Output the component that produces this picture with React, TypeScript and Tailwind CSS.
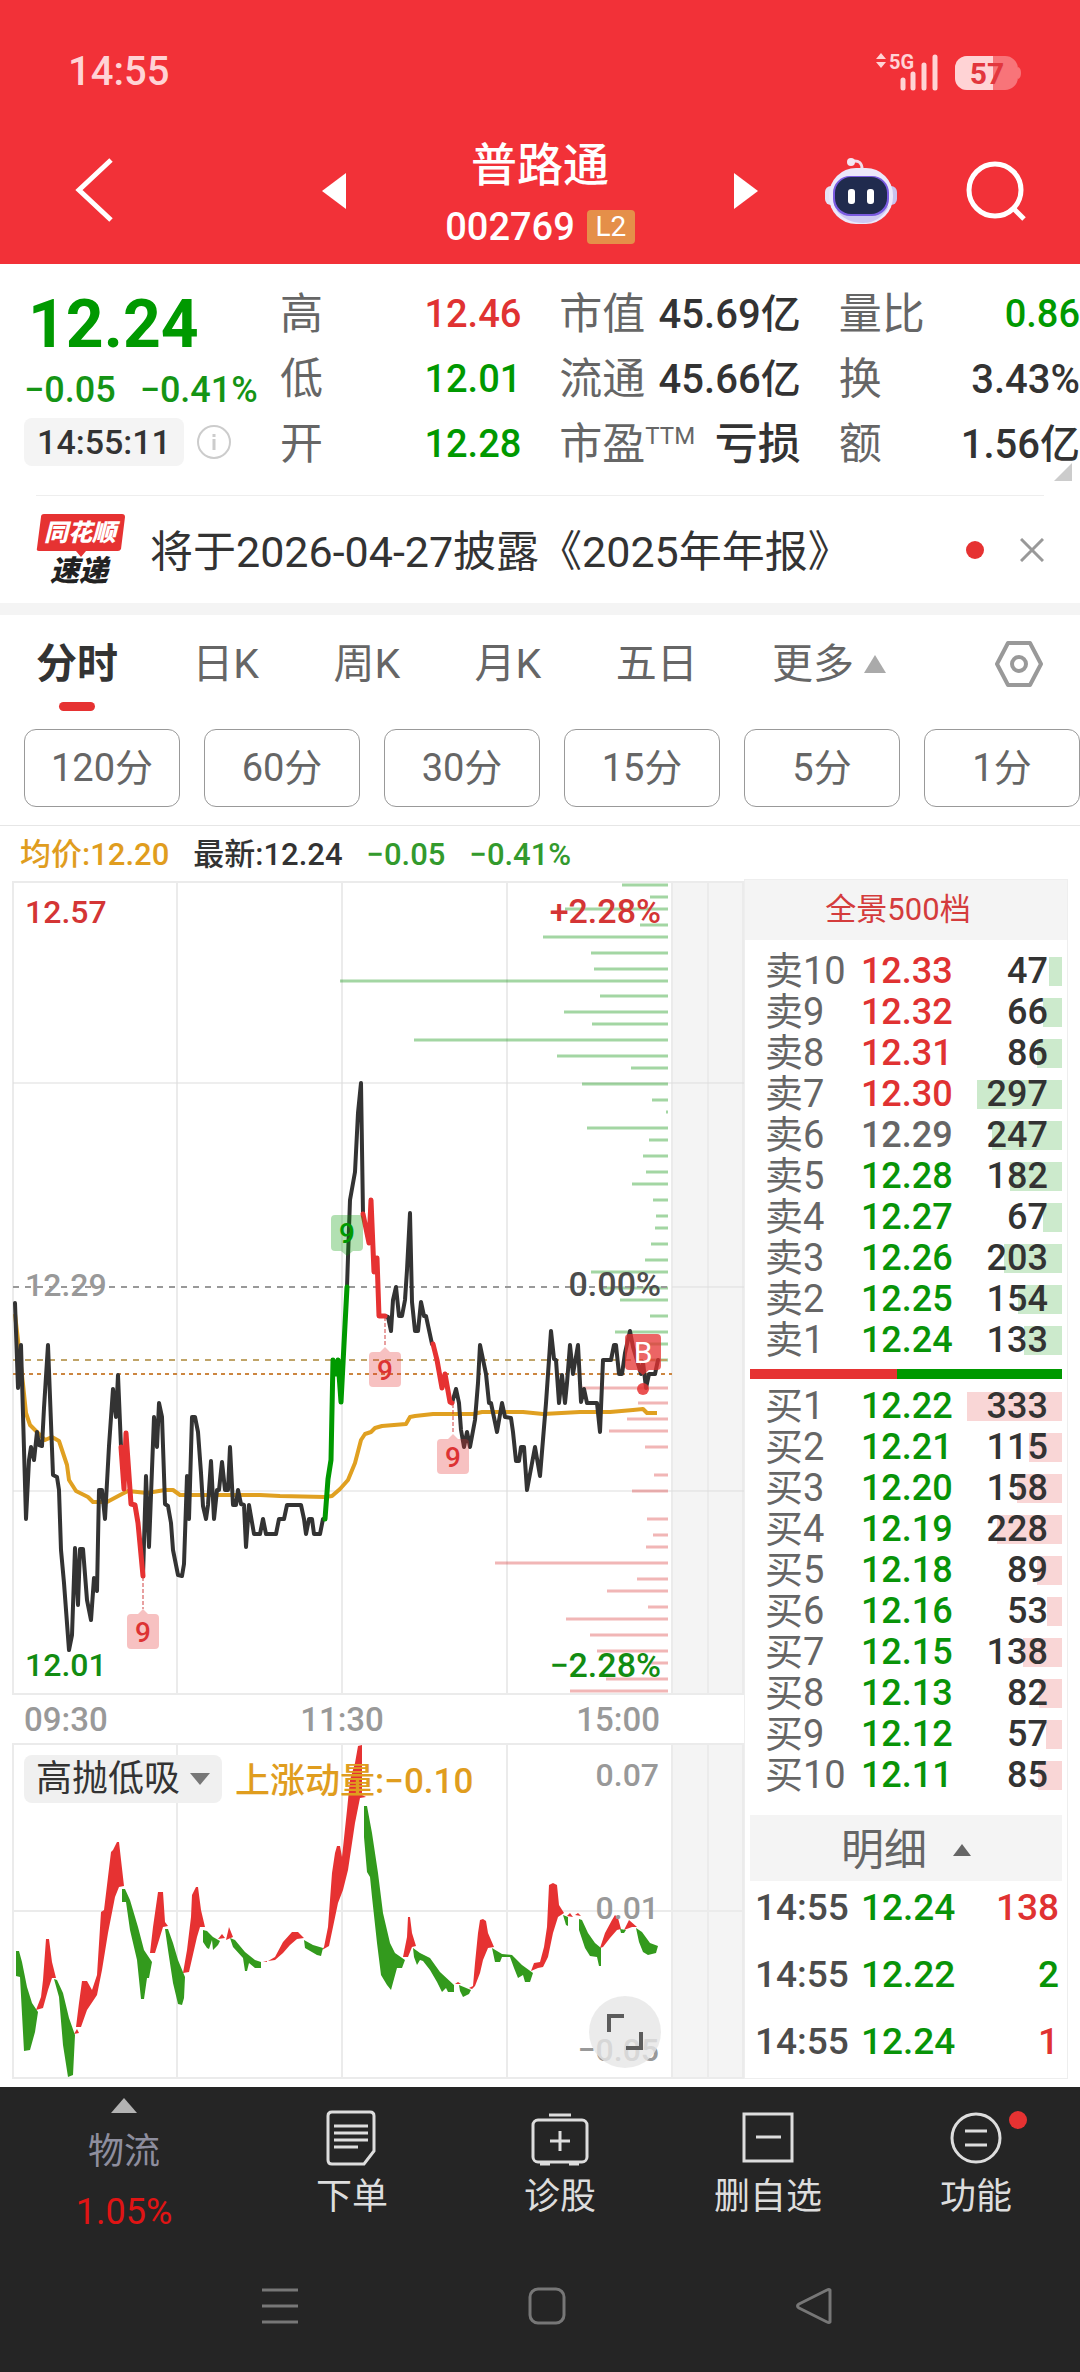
import React, { useState } from 'react';
import { clsx, type ClassValue } from 'clsx';
import { twMerge } from 'tailwind-merge';

function cn(...inputs: ClassValue[]) {
  return twMerge(clsx(inputs));
}

const stats = [
  { label: '高', value: '12.46', color: 'text-[#e03232]' },
  { label: '市值', value: '45.69亿', color: 'text-[#333333]', wide: true },
  { label: '量比', value: '0.86', color: 'text-[#009900]' },
  { label: '低', value: '12.01', color: 'text-[#009900]' },
  { label: '流通', value: '45.66亿', color: 'text-[#333333]', wide: true },
  { label: '换', value: '3.43%', color: 'text-[#333333]', wide: true },
  { label: '开', value: '12.28', color: 'text-[#009900]' },
  { label: '市盈', sup: 'TTM', value: '亏损', color: 'text-[#333333]', wide: true },
  { label: '额', value: '1.56亿', color: 'text-[#333333]', wide: true },
];

const tabs = ['分时', '日K', '周K', '月K', '五日'];
const minutes = ['120分', '60分', '30分', '15分', '5分', '1分'];

type Level = [string, string, number];

const sells: Level[] = [
  ['卖10', '12.33', 47],
  ['卖9', '12.32', 66],
  ['卖8', '12.31', 86],
  ['卖7', '12.30', 297],
  ['卖6', '12.29', 247],
  ['卖5', '12.28', 182],
  ['卖4', '12.27', 67],
  ['卖3', '12.26', 203],
  ['卖2', '12.25', 154],
  ['卖1', '12.24', 133],
];

const buys: Level[] = [
  ['买1', '12.22', 333],
  ['买2', '12.21', 115],
  ['买3', '12.20', 158],
  ['买4', '12.19', 228],
  ['买5', '12.18', 89],
  ['买6', '12.16', 53],
  ['买7', '12.15', 138],
  ['买8', '12.13', 82],
  ['买9', '12.12', 57],
  ['买10', '12.11', 85],
];

const trades = [
  { time: '14:55', price: '12.24', qty: 138, up: true },
  { time: '14:55', price: '12.22', qty: 2, up: false },
  { time: '14:55', price: '12.24', qty: 1, up: true },
];

// price line, split where the colour changes
const priceSegments = [
  {
    color: '#333333',
    width: 4,
    points:
      '15,1303 18,1388 21,1345 26,1519 29,1460 31,1447 34,1460 37,1432 39,1445 42,1446 44,1408 48,1345 53,1475 57,1477 59,1490 61,1550 64,1583 69,1650 72,1635 75,1548 78,1605 80,1549 83,1549 87,1600 91,1620 94,1578 97,1591 99,1490 102,1490 105,1519 109,1446 113,1389 116,1417 118,1375 121,1447',
  },
  {
    color: '#333333',
    width: 4,
    points:
      '143,1576 146,1476 149,1547 154,1417 157,1447 159,1403 162,1417 165,1504 168,1506 171,1523 173,1550 178,1575 182,1576 184,1564 187,1476 189,1519 192,1417 195,1417 198,1432 201,1473 203,1506 206,1519 208,1505 211,1461 214,1519 217,1490 219,1490 222,1462 225,1490 228,1490 230,1447 233,1505 236,1505 238,1490 241,1504 244,1505 246,1547 249,1505 254,1534 260,1534 263,1519 266,1534 276,1534 279,1519 284,1519 287,1505 301,1505 304,1519 306,1534 309,1519 312,1519 314,1534 320,1534 323,1519 325,1519',
  },
  {
    color: '#333333',
    width: 4,
    points: '347,1287 348,1257 350,1200 355,1172 358,1113 361,1083 363,1214',
  },
  {
    color: '#333333',
    width: 4,
    points:
      '385,1316 388,1317 391,1331 393,1300 396,1287 399,1316 402,1316 405,1300 407,1270 410,1213 412,1302 415,1331 418,1331 421,1302 424,1316 426,1316 432,1344 433,1344',
  },
  {
    color: '#333333',
    width: 4,
    points:
      '452,1403 456,1389 459,1403 461,1430 464,1447 467,1432 470,1447 475,1420 478,1383 480,1345 486,1374 489,1403 491,1403 497,1432 502,1403 505,1417 511,1418 513,1432 516,1461 519,1461 521,1447 524,1447 527,1490 535,1447 540,1476 546,1403 551,1331 554,1359 556,1360 559,1403 562,1375 565,1403 567,1383 570,1345 573,1374 578,1345 581,1402 584,1389 587,1403 597,1403 600,1432 603,1360 611,1360 614,1345 616,1345 619,1374 622,1374 625,1353 630,1331 633,1347 641,1374 643,1362 646,1388 649,1374 655,1374 658,1360',
  },
  { color: '#e63232', width: 5, points: '121,1447 124,1489 126,1433 131,1504 135,1505 138,1523 143,1576' },
  { color: '#e63232', width: 5, points: '363,1214 369,1243 371,1200 374,1272 377,1258 379,1316 385,1316' },
  { color: '#e63232', width: 5, points: '433,1344 437,1360 442,1388 445,1374 450,1402 452,1403' },
  {
    color: '#009900',
    width: 5,
    points: '325,1519 328,1479 331,1460 333,1360 336,1374 338,1360 341,1402 345,1325 347,1287',
  },
];

const averageLine =
  '15,1314 23,1384 26,1413 30,1425 37,1432 45,1440 52,1437 59,1441 67,1465 69,1480 76,1491 88,1497 93,1502 107,1502 122,1494 128,1491 147,1493 165,1490 173,1490 180,1495 260,1495 280,1496 325,1497 332,1496 340,1489 348,1480 355,1463 361,1440 365,1434 371,1432 375,1428 382,1426 406,1424 410,1417 415,1416 433,1414 453,1414 473,1414 482,1412 523,1412 543,1414 580,1412 610,1412 633,1410 643,1409 647,1413 657,1413';

// [y, left end] of each resting order line
const sellDepth = [
  [885, 622], [897, 650], [909, 565], [925, 640], [937, 543], [953, 591], [969, 594], [981, 340],
  [996, 600], [1012, 564], [1024, 592], [1040, 414], [1056, 557], [1068, 631], [1084, 582],
  [1100, 652], [1112, 666], [1128, 587], [1140, 649], [1156, 643], [1172, 646], [1184, 632],
  [1200, 653], [1216, 656], [1228, 655], [1244, 651], [1260, 645], [1272, 591], [1288, 603],
  [1300, 620], [1316, 650], [1332, 615], [1344, 640], [1360, 650],
];

const buyDepth = [
  [1388, 580], [1403, 638], [1419, 627], [1431, 609], [1447, 645], [1475, 654], [1491, 632],
  [1519, 647], [1535, 653], [1547, 646], [1563, 495], [1579, 637], [1591, 607], [1607, 648],
  [1619, 566], [1635, 590], [1651, 597], [1663, 650], [1679, 606], [1691, 570],
];

const momentumUp = [
  '36,2010 41,1997 43,1980 46,1939 49,1939 52,1962 56,1978 52,1978 48,1990 43,2008',
  '74,2034 77,2029 79,2033',
  '76,2027 79,2003 82,1981 87,1981 92,1990 97,1975 101,1912 104,1910 111,1852 113,1850 117,1842 119,1842 124,1886 119,1887 115,1897 108,1933 102,1970 97,1995 87,2010 81,2027',
  '150,1953 153,1927 158,1892 163,1892 165,1922 168,1926 163,1927 155,1953',
  '183,1973 187,1950 191,1917 192,1895 196,1887 198,1887 201,1910 205,1927 200,1927 197,1937 189,1972',
  '218,1939 222,1934 225,1938',
  '226,1940 229,1927 233,1937',
  '263,1962 267,1961 267,1962',
  '268,1961 275,1957 283,1942 292,1932 298,1932 304,1938 297,1939 290,1945 283,1953 275,1960',
  '324,1947 328,1927 332,1873 335,1853 337,1846 340,1846 342,1857 347,1810 350,1780 355,1763 358,1746 362,1745 362,1795 366,1797 360,1798 355,1823 348,1870 343,1890 338,1903 333,1927 329,1946 322,1950',
  '403,1957 407,1937 408,1917 410,1917 412,1933 416,1946 412,1947 408,1957',
  '455,1984 458,1982 461,1984',
  '469,1988 473,1986 475,1963 478,1933 480,1920 483,1919 486,1921 488,1933 494,1947 488,1948 483,1960 480,1973 475,1986 472,1989',
  '531,1971 534,1963 540,1962 544,1947 547,1927 549,1885 553,1883 557,1885 559,1905 564,1913 558,1917 553,1933 548,1957 543,1967 538,1968',
  '567,1916 570,1913 573,1917',
  '575,1915 578,1913 581,1916',
  '600,1948 605,1933 612,1920 615,1915 618,1918 621,1929 617,1930 610,1938 603,1947',
  '624,1930 629,1920 637,1927 632,1927',
];

const momentumDown = [
  '16,1951 19,1951 22,1962 27,1987 32,2003 38,2012 35,2032 30,2050 24,2051 20,1977 16,1976',
  '54,1979 57,1980 63,1993 69,2018 75,2035 73,2075 68,2077 63,2045 59,1997',
  '122,1889 125,1889 130,1900 138,1927 144,1950 152,1962 149,1978 147,1978 144,1999 141,1999 137,1960 130,1930 126,1902 122,1902',
  '165,1929 168,1929 173,1943 178,1960 185,1977 184,1998 182,2005 178,2004 173,1983 168,1950',
  '203,1930 207,1931 213,1937 220,1941 218,1945 213,1950 212,1940 209,1949 207,1948 203,1942',
  '230,1938 235,1940 245,1952 255,1960 261,1962 261,1968 255,1968 249,1963 247,1971 245,1971 243,1958 233,1947',
  '304,1940 313,1945 323,1948 321,1956 317,1955 305,1948',
  '364,1806 367,1806 372,1833 378,1873 383,1913 390,1943 395,1953 405,1960 402,1968 397,1968 391,1990 387,1985 381,1975 377,1943 372,1897 370,1877 367,1872 364,1837',
  '413,1948 420,1953 430,1958 440,1972 454,1985 454,1992 448,1992 446,1988 442,1992 437,1982 430,1970 423,1961 420,1960 417,1965 414,1957',
  '459,1985 471,1990 469,1994 463,1997 460,1991',
  '492,1948 502,1954 512,1955 522,1965 533,1973 530,1982 525,1982 523,1975 518,1978 514,1968 510,1957 502,1957 500,1962 495,1962',
  '563,1915 568,1917 568,1926 566,1925',
  '579,1919 582,1920 588,1933 595,1943 601,1948 601,1966 599,1966 597,1957 590,1956 585,1948 579,1930',
  '620,1929 626,1930 624,1933 621,1933',
  '636,1928 642,1932 650,1943 658,1946 656,1953 648,1955 643,1952 639,1942',
];

function StatusBar() {
  return (
    <div className="flex items-center justify-between pt-12 h-24 pl-[68px] pr-[59px] text-[#ffd3d5]">
      <span className="text-[40px] leading-[48px] font-medium">14:55</span>
      <svg viewBox="875 48 146 48" className="w-[146px] h-12" aria-label="5G 57%">
        <path d="M881 53l5 6h-10zM881 68l5-6h-10z" fill="currentColor" />
        <text x="889" y="69" fontSize="20" fontWeight="700" fill="currentColor">5G</text>
        <path d="M903 80v8M913 74v14M924 65v23M935 57v31" stroke="currentColor" strokeWidth="5" strokeLinecap="round" />
        <path d="M967 56h38a13 13 0 0 1 13 12v10a13 13 0 0 1-13 12h-38a12 12 0 0 1-12-12v-10a12 12 0 0 1 12-12z" fill="#f87479" />
        <path d="M1018 67q3 1 3 6t-3 6z" fill="#f87479" />
        <path d="M993 56h-26a12 12 0 0 0-12 12v10a12 12 0 0 0 12 12h26z" fill="currentColor" />
        <text x="987" y="84" fontSize="30" fontWeight="700" textAnchor="middle" fill="#e2363d">57</text>
      </svg>
    </div>
  );
}

function Robot() {
  return (
    <svg viewBox="0 0 72 68" className="w-[72px] h-[68px]" aria-hidden="true">
      <path d="M28 4q9-1 9 8" fill="none" stroke="#f1dcea" strokeWidth="3" />
      <circle cx="26" cy="5" r="4" fill="#f4e6f2" />
      <rect x="0" y="29" width="12" height="19" rx="6" fill="#e6e2f5" />
      <rect x="60" y="29" width="12" height="19" rx="6" fill="#c9c3ee" />
      <rect x="4" y="11" width="64" height="56" rx="27" fill="#ece8fa" />
      <path d="M11 53q10 13 27 13t26-17q-24 14-53 4z" fill="#cdc8f2" />
      <rect x="8" y="19" width="56" height="40" rx="17" fill="#7a5be0" />
      <rect x="10" y="20" width="52" height="37" rx="16" fill="#202b4e" />
      <rect x="23" y="32" width="7" height="15" rx="3" fill="#ffffff" />
      <rect x="42" y="32" width="7" height="15" rx="3" fill="#ffffff" />
    </svg>
  );
}

function Header() {
  return (
    <header className="bg-[#f23138] text-white">
      <StatusBar />
      <div className="grid grid-cols-[1fr_436px_1fr] items-center h-[168px] pt-[22px]">
        <div className="pl-[75px]">
          <button type="button" aria-label="返回" className="block">
            <svg viewBox="0 0 40 68" className="w-10 h-[68px]" fill="none" stroke="currentColor" strokeWidth="5">
              <path d="M36 3L4 33l32 30" />
            </svg>
          </button>
        </div>
        <div className="flex items-center justify-between">
          <button type="button" aria-label="上一只">
            <svg viewBox="0 0 24 36" className="w-6 h-9"><path d="M24 0v36L0 18z" fill="currentColor" /></svg>
          </button>
          <div className="flex flex-col items-center gap-2.5 pt-1.5">
            <h1 className="text-[46px] leading-[56px] font-medium">普路通</h1>
            <div className="flex items-center gap-3">
              <span className="text-[38px] leading-[48px] font-medium">002769</span>
              <span className="bg-[#e58f49] rounded-sm w-12 text-center text-[28px] leading-[34px]">L2</span>
            </div>
          </div>
          <button type="button" aria-label="下一只">
            <svg viewBox="0 0 24 36" className="w-6 h-9"><path d="M0 0v36l24-18z" fill="currentColor" /></svg>
          </button>
        </div>
        <div className="flex items-center justify-between pl-[67px] pr-[52px]">
          <button type="button" aria-label="智能助手"><Robot /></button>
          <button type="button" aria-label="搜索">
            <svg viewBox="0 0 64 64" className="w-16 h-16" fill="none" stroke="currentColor" strokeWidth="5">
              <circle cx="31" cy="31" r="26" />
              <path d="M49 49l11 11" />
            </svg>
          </button>
        </div>
      </div>
    </header>
  );
}

function Quote() {
  return (
    <section className="relative flex pl-6 pt-[18px] pb-[18px]">
      <div className="w-[256px] shrink-0">
        <div className="pl-1 text-[66px] leading-[86px] font-bold text-[#009900]">12.24</div>
        <div className="flex gap-6 text-[36px] leading-[44px] font-medium text-[#159415] whitespace-nowrap">
          <span>−0.05</span>
          <span>−0.41%</span>
        </div>
        <div className="flex items-center gap-3 mt-1.5">
          <span className="bg-[#f4f4f4] rounded-lg w-40 text-center text-[34px] leading-[48px] font-medium text-[#333333]">14:55:11</span>
          <button type="button" aria-label="说明">
            <svg viewBox="0 0 36 36" className="w-9 h-9" fill="none" stroke="#cccccc" strokeWidth="2">
              <circle cx="18" cy="18" r="16" />
              <path d="M18 15v11M18 10v3" strokeWidth="3" />
            </svg>
          </button>
        </div>
      </div>
      <dl className="flex-1 grid grid-cols-3 gap-x-[38px]">
        {stats.map((item) => (
          <div key={item.label} className="flex items-center justify-between h-[65px] whitespace-nowrap">
            <dt className="flex text-[43px] text-[#666666]">
              {item.label}
              {item.sup && <sup className="text-[24px] top-2 h-8 leading-8">{item.sup}</sup>}
            </dt>
            <dd className={cn('text-[38px] font-medium', item.color, item.wide && 'text-[40px]', item.sup && 'text-[43px]')}>
              {item.value}
            </dd>
          </div>
        ))}
      </dl>
      <svg viewBox="0 0 18 18" className="absolute right-2 bottom-3.5 w-[18px] h-[18px]"><path d="M18 0v18H0z" fill="#cccccc" /></svg>
    </section>
  );
}

function News() {
  return (
    <section className="flex items-center h-[108px] mx-9 border-t border-[#eeeeee]">
      <svg viewBox="0 0 90 80" className="w-[90px] h-20 shrink-0" aria-label="同花顺速递">
        <path d="M8 4h78q3 0 3 3l-4 32q-1 2-3 2H50l-5 6-5-6H3q-3 0-2-3L5 7q0-3 3-3z" fill="#e63232" />
        <text x="44" y="31" fontSize="24" fontWeight="900" fontStyle="italic" textAnchor="middle" fill="#ffffff">同花顺</text>
        <text x="43" y="71" fontSize="29" fontWeight="900" fontStyle="italic" textAnchor="middle" fill="#222222">速递</text>
      </svg>
      <a href="#report" className="flex-1 pt-1 pl-6 text-[43px] leading-[56px] text-[#333333] whitespace-nowrap">
        将于2026-04-27披露《2025年年报》
      </a>
      <span className="w-[18px] h-[18px] rounded-full bg-[#e63232] mr-9" />
      <button type="button" aria-label="关闭">
        <svg viewBox="0 0 24 24" className="w-6 h-6" stroke="#999999" strokeWidth="3"><path d="M1 1l22 22M23 1L1 23" /></svg>
      </button>
    </section>
  );
}

function Tabs() {
  const [active, setActive] = useState('分时');

  return (
    <nav className="flex items-center justify-between h-[98px] pl-9 pr-9">
      <div className="flex justify-between w-[850px] text-[41px] leading-[98px] text-[#666666]">
        {tabs.map((tab) => (
          <button
            key={tab}
            type="button"
            onClick={() => setActive(tab)}
            className={cn('relative', tab === active && 'font-bold text-[#333333]')}
          >
            {tab}
            {tab === active && (
              <span className="absolute bottom-0.5 left-1/2 -translate-x-1/2 w-9 h-[9px] rounded-full bg-[#e63232]" />
            )}
          </button>
        ))}
        <button type="button" className="flex items-center gap-2.5">
          更多
          <svg viewBox="0 0 22 18" className="w-[22px] h-[18px]"><path d="M11 0l11 18H0z" fill="#aaaaaa" /></svg>
        </button>
      </div>
      <button type="button" aria-label="设置">
        <svg viewBox="0 0 50 48" className="w-[50px] h-12" fill="none" stroke="#999999" strokeWidth="4" strokeLinejoin="round">
          <path d="M14 3h22l11 21-11 21H14L3 24z" />
          <circle cx="25" cy="24" r="7" />
        </svg>
      </button>
    </nav>
  );
}

function Badge({ x, y, from }: { x: number; y: number; from: number }) {
  return (
    <g>
      <path d={`M${x} ${from}V${y - 5}`} stroke="#d04040" strokeWidth="1" strokeDasharray="4 2" />
      <path d={`M${x - 16} ${y + 4}q0-4 4-4h7l5-5 5 5h7q4 0 4 4v27q0 4-4 4h-24q-4 0-4-4z`} fill="#e63232" fillOpacity="0.3" />
      <text x={x} y={y + 28} fontSize="28" fontWeight="500" textAnchor="middle" fill="#dd3333">9</text>
    </g>
  );
}

function PriceChart() {
  return (
    <svg viewBox="0 879 744 817" className="block w-full" aria-label="分时走势">
      <rect x="671" y="881" width="73" height="814" fill="#f4f4f4" />
      <g stroke="#ebebeb" strokeWidth="2">
        <path d="M13 882H744M13 1694H744M13 881V1695M177 881V1695M342 881V1695M507 881V1695M672 881V1695M708 881V1695M743 881V1695" />
        <path d="M13 1083H744M13 1491H744M672 1287H744" strokeWidth="1" stroke="#dddddd" />
      </g>
      <path d={sellDepth.map(([y, x]) => `M${x} ${y}H668`).join('')} stroke="#008c00" strokeOpacity="0.36" strokeWidth="3" />
      <path d={buyDepth.map(([y, x]) => `M${x} ${y}H668`).join('')} stroke="#d93636" strokeOpacity="0.36" strokeWidth="3" />
      <path d="M13 1287H668" stroke="#999999" strokeWidth="2" strokeDasharray="6 6" />
      <path d="M13 1360H668" stroke="#c0a468" strokeWidth="2" strokeDasharray="6 6" />
      <path d="M13 1374H672" stroke="#cc8640" strokeWidth="2" strokeDasharray="4 4" />
      <polyline points={averageLine} fill="none" stroke="#e0a021" strokeWidth="4" strokeLinejoin="round" />
      {priceSegments.map((segment) => (
        <polyline
          key={segment.points}
          points={segment.points}
          fill="none"
          stroke={segment.color}
          strokeWidth={segment.width}
          strokeLinejoin="round"
          strokeLinecap="round"
        />
      ))}
      <path d="M331 1219q0-4 4-4h24q4 0 4 4v28q0 4-4 4h-6l-6 5-6-5h-6q-4 0-4-4z" fill="#009900" fillOpacity="0.3" />
      <text x="347" y="1243" fontSize="28" fontWeight="500" textAnchor="middle" fill="#009900">9</text>
      <Badge x={143} y={1614} from={1577} />
      <Badge x={385} y={1352} from={1317} />
      <Badge x={453} y={1439} from={1404} />
      <path d="M625 1338q0-4 4-4h28q4 0 4 4v28q0 4-4 4h-8l-6 5-6-5h-8q-4 0-4-4z" fill="#e63232" fillOpacity="0.75" />
      <circle cx="643" cy="1389" r="6" fill="#e63232" fillOpacity="0.85" />
      <text x="643" y="1363" fontSize="30" textAnchor="middle" fill="#ffffff">B</text>
      <g fontSize="32" fontWeight="500">
        <text x="25" y="923" fill="#d43535">12.57</text>
        <text x="25" y="1296" fill="#999999">12.29</text>
        <text x="25" y="1676" fill="#128c12">12.01</text>
      </g>
      <g fontSize="34" fontWeight="500" textAnchor="end">
        <text x="661" y="923" fill="#d43535">+2.28%</text>
        <text x="661" y="1296" fill="#4c4c4c">0.00%</text>
        <text x="661" y="1677" fill="#128c12">−2.28%</text>
      </g>
    </svg>
  );
}

function MomentumChart() {
  return (
    <div className="relative">
      <svg viewBox="0 1743 744 336" className="block w-full" aria-label="上涨动量">
        <rect x="671" y="1743" width="73" height="335" fill="#f4f4f4" />
        <path
          d="M13 1744H744M13 1911H744M13 2078H744M13 1743V2079M177 1743V2079M342 1743V2079M507 1743V2079M672 1743V2079M708 1743V2079M743 1743V2079"
          stroke="#ebebeb"
          strokeWidth="2"
        />
        {momentumUp.map((points) => <polygon key={points} points={points} fill="#e63232" />)}
        {momentumDown.map((points) => <polygon key={points} points={points} fill="#339a1d" />)}
        <text x="235" y="1793" fontSize="35" fontWeight="500" fill="#e09d1e">上涨动量:−0.10</text>
        <g fontSize="32" fontWeight="500" fill="#999999" textAnchor="end">
          <text x="659" y="1786">0.07</text>
          <text x="659" y="1919">0.01</text>
          <text x="659" y="2061">−0.05</text>
        </g>
      </svg>
      <button type="button" className="absolute left-6 top-3 flex items-center gap-2.5 h-12 px-3 rounded-lg bg-[#f0f0f0] text-[36px] text-[#333333] whitespace-nowrap">
        高抛低吸
        <svg viewBox="0 0 20 12" className="w-5 h-3"><path d="M0 0h20L10 12z" fill="#777777" /></svg>
      </button>
      <button type="button" aria-label="全屏" className="absolute right-[83px] bottom-[11px] w-[72px] h-[72px] rounded-full bg-[#e6e6e6]/80 flex items-center justify-center">
        <svg viewBox="0 0 38 38" className="w-[38px] h-[38px]" fill="none" stroke="#5c5c5c" strokeWidth="4">
          <path d="M3 19V3h15M35 19v16H20" />
        </svg>
      </button>
    </div>
  );
}

function priceColor(price: string) {
  if (Number(price) > 12.29) return 'text-[#e03232]';
  if (Number(price) < 12.29) return 'text-[#089408]';
  return 'text-[#666666]';
}

function Levels({ rows, bar }: { rows: Level[]; bar: string }) {
  return (
    <table className="w-full table-fixed text-left">
      <tbody>
        {rows.map(([label, price, qty]) => (
          <tr key={label} className="leading-[41px] text-[36px] font-medium">
            <th scope="row" className="w-[36%] p-0 pl-5 text-[38px] font-normal text-[#666666] whitespace-nowrap">{label}</th>
            <td className={cn('w-[29%] p-0', priceColor(price))}>{price}</td>
            <td className="relative p-0 pr-[19px] text-right text-[#333333]">
              <span
                className={cn('absolute right-[5px] top-1.5 h-[29px]', bar)}
                style={{ width: `${Math.round(qty * 0.285)}px` }}
              />
              <span className="relative">{qty}</span>
            </td>
          </tr>
        ))}
      </tbody>
    </table>
  );
}

function OrderBook() {
  return (
    <aside className="border border-[#eeeeee]">
      <button type="button" className="block w-full h-[60px] pr-4 bg-[#f4f4f4] text-[31px] text-[#d43c3c]">全景500档</button>
      <div className="mt-[11px]">
        <Levels rows={sells} bar="bg-[#cceacc]" />
      </div>
      <div className="flex h-[10px] mx-[5px] mt-2 mb-[7px] bg-[#009900]">
        <div className="w-[47%] bg-[#e63232]" />
      </div>
      <Levels rows={buys} bar="bg-[#f9d6d6]" />
      <button type="button" className="flex items-center justify-center gap-[26px] w-[312px] max-w-full h-[66px] mx-auto mt-[19px] pt-1 bg-[#f4f4f4] text-[43px] leading-[60px] text-[#666666]">
        明细
        <svg viewBox="0 0 18 12" className="w-[18px] h-3"><path d="M9 0l9 12H0z" fill="#666666" /></svg>
      </button>
      <table className="w-full table-fixed">
        <tbody>
          {trades.map((trade, i) => (
            <tr key={i} className="leading-[54px] text-[37px] font-medium [&:not(:first-child)>td]:pt-[13px]">
              <td className="w-[36%] p-0 pl-2.5 text-[#4c4c4c]">{trade.time}</td>
              <td className="w-[32%] p-0 text-[#089408]">{trade.price}</td>
              <td className={cn('p-0 pr-2 text-right', trade.up ? 'text-[#e03232]' : 'text-[#089408]')}>{trade.qty}</td>
            </tr>
          ))}
        </tbody>
      </table>
    </aside>
  );
}

function BottomBar() {
  const actions = [
    {
      label: '下单',
      icon: (
        <>
          <path d="M9 3h38q4 0 4 4v35L41 55H9q-4 0-4-4V7q0-4 4-4z" />
          <path d="M11 17h34M11 24h34M11 31h34M11 38h24" />
        </>
      ),
    },
    {
      label: '诊股',
      icon: (
        <>
          <rect x="2" y="11" width="54" height="42" rx="5" />
          <path d="M18 6h22M29 22v20M19 32h20M9 55h10M38 55h10" />
        </>
      ),
    },
    {
      label: '删自选',
      icon: (
        <>
          <rect x="5" y="5" width="48" height="47" />
          <path d="M17 28h25" />
        </>
      ),
    },
    {
      label: '功能',
      dot: true,
      icon: (
        <>
          <circle cx="29" cy="29" r="24" />
          <path d="M18 22h22M18 36h22" />
        </>
      ),
    },
  ];

  return (
    <footer className="mt-2 bg-[#252525]">
      <div className="grid grid-cols-[248fr_208fr_208fr_208fr_208fr] text-[36px] leading-[44px] text-[#dddddd]">
        <button type="button" className="flex flex-col items-center pt-[11px]">
          <svg viewBox="0 0 26 15" className="w-[26px] h-[15px]"><path d="M13 0l13 15H0z" fill="#b3b3b3" /></svg>
          <span className="mt-[17px] text-[#8e8e9e]">物流</span>
          <span className="mt-4 text-[#e01414]">1.05%</span>
        </button>
        {actions.map((action) => (
          <button key={action.label} type="button" className="flex flex-col items-center pt-[22px]">
            <span className="relative">
              <svg viewBox="0 0 58 58" className="w-[58px] h-[58px]" fill="none" stroke="currentColor" strokeWidth="3">
                {action.icon}
              </svg>
              {action.dot && <span className="absolute top-0.5 -right-[22px] w-[18px] h-[18px] rounded-full bg-[#e63232]" />}
            </span>
            <span className="mt-2">{action.label}</span>
          </button>
        ))}
      </div>
      <div className="grid grid-cols-3 justify-items-center items-center h-[138px] pt-1.5 pl-[146px] pr-[132px] text-[#777777]">
        <button type="button" aria-label="最近任务">
          <svg viewBox="0 0 38 38" className="w-[38px] h-[38px]" stroke="currentColor" strokeWidth="3"><path d="M1 3h36M1 19h36M1 35h36" /></svg>
        </button>
        <button type="button" aria-label="主屏幕">
          <svg viewBox="0 0 38 38" className="w-[38px] h-[38px]" fill="none" stroke="currentColor" strokeWidth="3"><rect x="2" y="2" width="34" height="34" rx="8" /></svg>
        </button>
        <button type="button" aria-label="后退">
          <svg viewBox="0 0 38 38" className="w-[38px] h-[38px]" fill="none" stroke="currentColor" strokeWidth="3" strokeLinejoin="round"><path d="M35 3v32q-1 1-3 0L4 21q-3-2 0-4L32 3q2-1 3 0z" /></svg>
        </button>
      </div>
    </footer>
  );
}

export default function App() {
  return (
    <div className="bg-white overflow-x-hidden font-['Roboto','Noto_Sans_CJK_SC',sans-serif]">
      <Header />
      <Quote />
      <News />
      <div className="h-3 bg-[#f4f4f4]" />
      <Tabs />
      <div className="flex gap-6 pl-6 pt-4 pb-[18px]">
        {minutes.map((label) => (
          <button key={label} type="button" className="flex-1 h-[78px] rounded-xl border border-[#999999] text-[38px] text-[#666666]">
            {label}
          </button>
        ))}
      </div>
      <div className="flex items-center gap-6 h-[54px] pt-1.5 pl-5 border-t border-[#e6e6e6] text-[31px] font-medium whitespace-nowrap">
        <span className="text-[#e09d1e]">均价:12.20</span>
        <span className="text-[#333333]">最新:12.24</span>
        <span className="text-[#339a2d]">−0.05</span>
        <span className="text-[#339a2d]">−0.41%</span>
      </div>
      <main className="grid grid-cols-[744fr_324fr] pr-3">
        <div>
          <PriceChart />
          <div className="flex justify-between pl-6 pr-[84px] text-[33px] leading-[47px] font-medium text-[#999999]">
            <span>09:30</span>
            <span>11:30</span>
            <span>15:00</span>
          </div>
          <MomentumChart />
        </div>
        <OrderBook />
      </main>
      <BottomBar />
    </div>
  );
}
